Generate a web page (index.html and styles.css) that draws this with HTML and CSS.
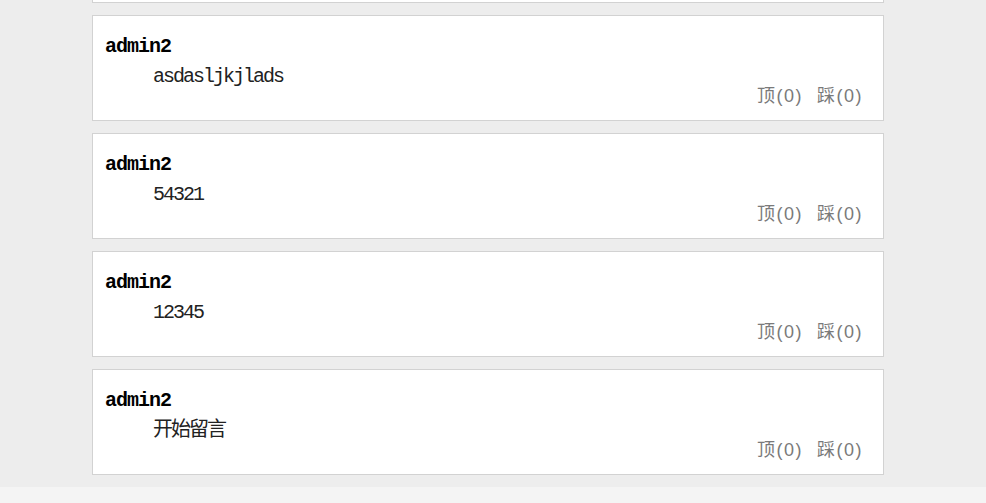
FILE: index.html
```html
<!DOCTYPE html>
<html lang="zh-CN">
<head>
<meta charset="utf-8">
<title>留言</title>
<link rel="stylesheet" href="styles.css">
</head>
<body>
<div class="page">
  <ul class="list">
    <li class="card card-above" aria-hidden="true"></li>
    <li class="card">
      <div class="name">admin2</div>
      <div class="text">asdasljkjlads</div>
      <div class="votes"><span class="vote">顶(0)</span><span class="vote">踩(0)</span></div>
    </li>
    <li class="card">
      <div class="name">admin2</div>
      <div class="text">54321</div>
      <div class="votes"><span class="vote">顶(0)</span><span class="vote">踩(0)</span></div>
    </li>
    <li class="card">
      <div class="name">admin2</div>
      <div class="text">12345</div>
      <div class="votes"><span class="vote">顶(0)</span><span class="vote">踩(0)</span></div>
    </li>
    <li class="card">
      <div class="name">admin2</div>
      <div class="text">开始留言</div>
      <div class="votes"><span class="vote">顶(0)</span><span class="vote">踩(0)</span></div>
    </li>
  </ul>
  <div class="footer"></div>
</div>
</body>
</html>
```
FILE: styles.css
```css
html, body {
  margin: 0;
  padding: 0;
  background: #ededed;
}
body {
  overflow: hidden;
  height: 503px;
}
.page {
  display: flex;
  flex-direction: column;
  min-height: 503px;
}
.list {
  list-style: none;
  margin: -103px 0 0 92px;
  padding: 0 0 12px 0;
  width: 792px;
  display: flex;
  flex-direction: column;
  gap: 12px;
}
.card {
  box-sizing: border-box;
  height: 106px;
  background: #fff;
  border: 1px solid #d2d2d2;
  padding: 17px 0 0 12px;
  display: flex;
  flex-direction: column;
}
.name {
  font-family: "Liberation Mono", "Noto Sans CJK SC", monospace;
  font-weight: bold;
  font-size: 20px;
  letter-spacing: -1px;
  line-height: 28px;
  color: #000;
}
.text {
  font-family: "Liberation Mono", "Noto Sans CJK SC", monospace;
  font-size: 20px;
  letter-spacing: -2px;
  line-height: 31px;
  color: #222;
  padding-left: 48px;
}
.votes {
  display: flex;
  justify-content: flex-end;
  gap: 14px;
  margin-top: -6px;
  padding-right: 20px;
  font-family: "Liberation Sans", "Noto Sans CJK SC", sans-serif;
  font-size: 18px;
  line-height: 20px;
  letter-spacing: 1.5px;
  color: #7a7a7a;
}
.vote {
  white-space: nowrap;
}
.footer {
  flex: 1;
  background: #f4f4f4;
}
```
